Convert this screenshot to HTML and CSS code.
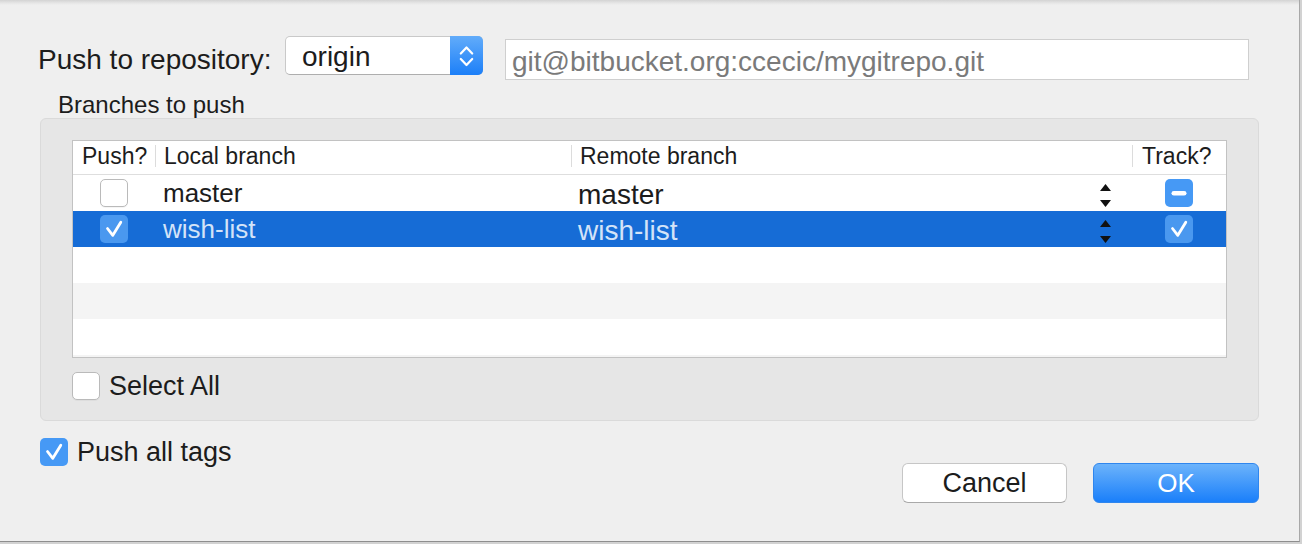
FILE: index.html
```html
<!DOCTYPE html>
<html>
<head>
<meta charset="utf-8">
<title>Push</title>
<link rel="stylesheet" href="styles.css">
</head>
<body>
<div class="window">
  <div class="content">
    <div class="repo-row">
      <div class="repo-label">Push to repository:</div>
      <div class="popup">
        <span class="popup-value">origin</span>
        <span class="popup-arrows">
          <svg width="15" height="24" viewBox="0 0 15 24"><polyline points="1.8,9.5 7.5,3.5 13.2,9.5" fill="none" stroke="#fff" stroke-width="2.2" stroke-linecap="round" stroke-linejoin="round"/><polyline points="1.8,15 7.5,21 13.2,15" fill="none" stroke="#fff" stroke-width="2.2" stroke-linecap="round" stroke-linejoin="round"/></svg>
        </span>
      </div>
      <div class="url-field">git@bitbucket.org:ccecic/mygitrepo.git</div>
    </div>

    <div class="section-title">Branches to push</div>

    <div class="group">
      <div class="table">
        <div class="thead">
          <div class="th col-push">Push?</div>
          <div class="th col-local">Local branch</div>
          <div class="th col-remote">Remote branch</div>
          <div class="th col-track">Track?</div>
        </div>
        <div class="tbody">
          <div class="tr">
            <div class="td col-push"><span class="cb off"></span></div>
            <div class="td col-local">master</div>
            <div class="td col-remote">
              <span class="remote-name">master</span>
              <svg class="stepper" width="11" height="23" viewBox="0 0 11 23"><polygon points="5.5,0 11,7 0,7" fill="#111"/><polygon points="0,16 11,16 5.5,23" fill="#111"/></svg>
            </div>
            <div class="td col-track"><span class="cb on"><svg width="28" height="28" viewBox="0 0 28 28"><rect x="6.5" y="12" width="15" height="4.6" rx="2.3" fill="#fff"/></svg></span></div>
          </div>
          <div class="tr selected">
            <div class="td col-push"><span class="cb on sel"><svg width="28" height="28" viewBox="0 0 28 28"><polyline points="7.5,13.5 12.8,20.3 20.8,7.2" fill="none" stroke="#fff" stroke-width="2.8" stroke-linecap="round" stroke-linejoin="round"/></svg></span></div>
            <div class="td col-local">wish-list</div>
            <div class="td col-remote">
              <span class="remote-name">wish-list</span>
              <svg class="stepper" width="11" height="23" viewBox="0 0 11 23"><polygon points="5.5,0 11,7 0,7" fill="#111"/><polygon points="0,16 11,16 5.5,23" fill="#111"/></svg>
            </div>
            <div class="td col-track"><span class="cb on sel"><svg width="28" height="28" viewBox="0 0 28 28"><polyline points="7.5,13.5 12.8,20.3 20.8,7.2" fill="none" stroke="#fff" stroke-width="2.8" stroke-linecap="round" stroke-linejoin="round"/></svg></span></div>
          </div>
          <div class="tr"></div>
          <div class="tr alt"></div>
          <div class="tr"></div>
          <div class="tr alt"></div>
        </div>
      </div>
      <div class="select-all">
        <span class="cb off"></span>
        <span class="check-label">Select All</span>
      </div>
    </div>

    <div class="footer">
      <div class="tags">
        <span class="cb on"><svg width="28" height="28" viewBox="0 0 28 28"><polyline points="7.5,13.5 12.8,20.3 20.8,7.2" fill="none" stroke="#fff" stroke-width="2.8" stroke-linecap="round" stroke-linejoin="round"/></svg></span>
        <span class="check-label">Push all tags</span>
      </div>
      <div class="buttons">
        <div class="btn btn-cancel">Cancel</div>
        <div class="btn btn-ok">OK</div>
      </div>
    </div>
  </div>
</div>
</body>
</html>
```

FILE: styles.css
```css
html, body {
  margin: 0;
  padding: 0;
}
body {
  width: 1302px;
  height: 544px;
  overflow: hidden;
  background: #d2d2d2;
  font-family: "Liberation Sans", Arial, sans-serif;
  color: #1c1c1c;
}
.window {
  width: 1300px;
  height: 542px;
  box-sizing: border-box;
  border-right: 1px solid #a8a8a8;
  border-bottom: 1px solid #8e8e8e;
  background: linear-gradient(#d3d3d3 0, #e6e6e6 3px, #efefef 5px, #efefef 100%);
  padding: 36px 0 0 38px;
}
.content {
  width: 1221px;
}

/* repository row */
.repo-row {
  display: flex;
  align-items: flex-start;
}
.repo-label {
  width: 247px;
  font-size: 28px;
  line-height: 28px;
  margin-top: 10px;
  white-space: nowrap;
}
.popup {
  width: 198px;
  height: 39px;
  box-sizing: border-box;
  display: flex;
  background: #fff;
  border: 1px solid #c9c9c9;
  border-bottom-color: #aeaeae;
  border-radius: 5px;
}
.popup-value {
  flex: 1;
  padding: 2px 0 0 16px;
  font-size: 28px;
  line-height: 35px;
}
.popup-arrows {
  width: 33px;
  margin: -1px -1px -1px 0;
  border-radius: 0 5px 5px 0;
  background: linear-gradient(#62acfa, #1c7ff8);
  display: flex;
  align-items: center;
  justify-content: center;
}
.url-field {
  margin-left: 22px;
  margin-top: 3px;
  width: 744px;
  height: 41px;
  box-sizing: border-box;
  border: 1px solid #cfcfcf;
  background: #fff;
  color: #7a7a7a;
  font-size: 28px;
  line-height: 36px;
  padding: 4px 0 0 6px;
  white-space: nowrap;
}

.section-title {
  margin: 13px 0 0 20px;
  font-size: 24px;
  line-height: 24px;
}

/* group box */
.group {
  margin: 1px 0 0 2px;
  width: 1219px;
  box-sizing: border-box;
  background: #e6e6e6;
  border: 1px solid #dadada;
  border-radius: 6px;
  padding: 21px 31px 20px 31px;
}
.table {
  height: 218px;
  box-sizing: border-box;
  border: 1px solid #c2c2c2;
  background: #fff;
}
.thead {
  display: flex;
  align-items: flex-start;
  height: 34px;
  box-sizing: border-box;
  padding-top: 4px;
  border-bottom: 1px solid #dedede;
}
.th {
  height: 22px;
  box-sizing: border-box;
  font-size: 23px;
  line-height: 22px;
  padding-left: 8px;
  border-left: 1px solid #dcdcdc;
  white-space: nowrap;
}
.th.col-push {
  border-left: none;
  padding-left: 9px;
}
.th.col-track {
  padding-left: 9px;
}
.col-push { width: 82px; flex: none; }
.col-local { width: 416px; flex: none; box-sizing: border-box; }
.col-remote { width: 561px; flex: none; box-sizing: border-box; }
.col-track { width: 94px; flex: none; }

.tbody {
  height: 182px;
  overflow: hidden;
}
.tr {
  display: flex;
  align-items: center;
  height: 36px;
}
.tr.alt {
  background: #f4f4f4;
}
.tr.selected {
  background: #166cd6;
  color: #d3e3f8;
}
.td.col-push,
.td.col-track {
  display: flex;
  justify-content: center;
}
.td.col-local {
  padding-left: 8px;
  font-size: 26px;
  line-height: 36px;
}
.td.col-remote {
  display: flex;
  align-items: flex-start;
  align-self: stretch;
  padding-left: 7px;
}
.remote-name {
  flex: 1;
  font-size: 28px;
  line-height: 32px;
  padding-top: 4px;
}
.stepper {
  margin-top: 9px;
  margin-right: 21px;
}

/* checkboxes */
.cb {
  width: 28px;
  height: 28px;
  box-sizing: border-box;
  border-radius: 5px;
  display: flex;
  align-items: center;
  justify-content: center;
  flex: none;
}
.cb svg {
  display: block;
}
.cb.off {
  background: #fff;
  border: 1px solid #bababa;
  box-shadow: 0 1px 0 rgba(0, 0, 0, 0.04);
}
.cb.on {
  background: #4699f5;
}
.cb.on.sel {
  background: #4a98ef;
}

.select-all {
  display: flex;
  align-items: center;
  gap: 9px;
  margin-top: 14px;
}
.check-label {
  font-size: 27px;
  line-height: 27px;
  white-space: nowrap;
}

/* footer */
.footer {
  margin-left: 2px;
  width: 1219px;
  display: flex;
  justify-content: space-between;
  align-items: flex-start;
}
.tags {
  display: flex;
  align-items: center;
  gap: 9px;
  margin-top: 17px;
}
.buttons {
  display: flex;
  gap: 26px;
  margin-top: 42px;
}
.btn {
  height: 40px;
  box-sizing: border-box;
  border-radius: 6px;
  font-size: 27px;
  line-height: 38px;
  text-align: center;
}
.btn-cancel {
  width: 165px;
  background: #fff;
  border: 1px solid #c6c6c6;
  border-bottom-color: #a9a9a9;
}
.btn-ok {
  width: 166px;
  background: linear-gradient(#6cb3fb, #1a7ffa);
  border: 1px solid #2f86ee;
  color: #fff;
  font-size: 26px;
}
```
